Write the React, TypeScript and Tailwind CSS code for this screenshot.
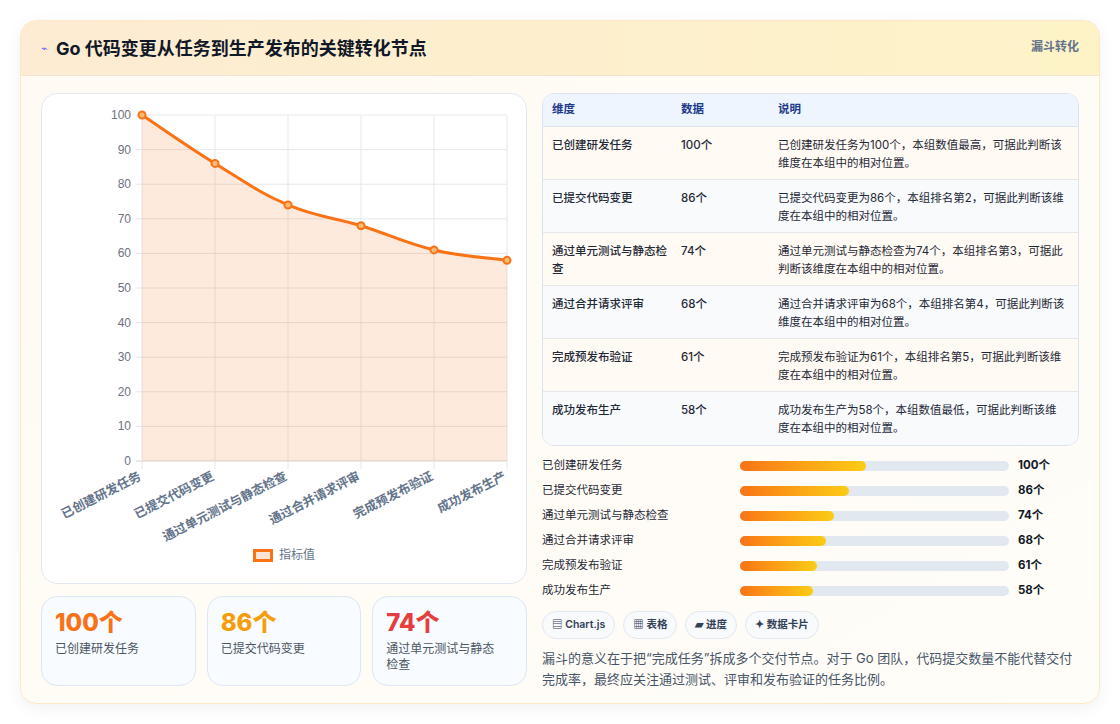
import React from 'react';

const font = { fontFamily: 'Inter, "Noto Sans CJK SC", sans-serif' };

const data = [
  { name: '已创建研发任务', value: 100, desc: '已创建研发任务为100个，本组数值最高，可据此判断该维度在本组中的相对位置。' },
  { name: '已提交代码变更', value: 86, desc: '已提交代码变更为86个，本组排名第2，可据此判断该维度在本组中的相对位置。' },
  { name: '通过单元测试与静态检查', value: 74, desc: '通过单元测试与静态检查为74个，本组排名第3，可据此判断该维度在本组中的相对位置。' },
  { name: '通过合并请求评审', value: 68, desc: '通过合并请求评审为68个，本组排名第4，可据此判断该维度在本组中的相对位置。' },
  { name: '完成预发布验证', value: 61, desc: '完成预发布验证为61个，本组排名第5，可据此判断该维度在本组中的相对位置。' },
  { name: '成功发布生产', value: 58, desc: '成功发布生产为58个，本组数值最低，可据此判断该维度在本组中的相对位置。' },
];

const X0 = 100, X1 = 465, Y0 = 367, K = 3.46;
const pts = data.map((d, i) => [X0 + (i * (X1 - X0)) / 5, Y0 - d.value * K]);

function smooth(p: number[][]) {
  let d = `M${p[0][0]},${p[0][1]}`;
  for (let i = 0; i < p.length - 1; i++) {
    const a = p[i - 1] || p[i], b = p[i], c = p[i + 1], e = p[i + 2] || c;
    const t = 0.2;
    d += ` C${b[0] + (c[0] - a[0]) * t},${b[1] + (c[1] - a[1]) * t} ${c[0] - (e[0] - b[0]) * t},${c[1] - (e[1] - b[1]) * t} ${c[0]},${c[1]}`;
  }
  return d;
}

function Chart() {
  const line = smooth(pts);
  return (
    <svg width="486" height="450" className="block overflow-visible">
      {[0, 10, 20, 30, 40, 50, 60, 70, 80, 90, 100].map((v) => (
        <g key={v}>
          <line x1={X0 - 6} x2={X1} y1={Y0 - v * K} y2={Y0 - v * K} stroke={v === 0 ? '#d6d3d1' : '#e5e7eb'} />
          <text x={89} y={Y0 - v * K + 4} textAnchor="end" fontSize="12" fill="#6b7280" fontFamily="Liberation Sans, sans-serif">{v}</text>
        </g>
      ))}
      {pts.map((p, i) => (
        <line key={i} x1={p[0]} x2={p[0]} y1={22} y2={Y0 + 8} stroke="#e5e7eb" />
      ))}
      <path d={`${line} L${X1},${Y0} L${X0},${Y0} Z`} fill="rgba(249,115,22,0.15)" />
      <path d={line} fill="none" stroke="#f97316" strokeWidth="3" />
      {pts.map((p, i) => (
        <circle key={i} cx={p[0]} cy={p[1]} r="3.5" fill="#fdba74" stroke="#f97316" strokeWidth="2" />
      ))}
      {pts.map((p, i) => (
        <text key={i} x={p[0]} y={Y0 + 18} textAnchor="end" fontSize="12.5" fontWeight="600" fill="#64748b"
          transform={`rotate(-27 ${p[0]} ${Y0 + 18})`} style={font}>{data[i].name}</text>
      ))}
    </svg>
  );
}

export default function App() {
  return (
    <div className="w-[1120px] h-[724px] bg-white p-5" style={font}>
      <div className="h-[684px] rounded-2xl border border-[#fde7c7] bg-gradient-to-br from-[#fffaf3] to-[#fffdf8] shadow-[0_4px_16px_rgba(0,0,0,0.06)] overflow-hidden">
        <div className="h-[55px] flex items-center justify-between px-5 bg-gradient-to-r from-[#fdebd3] to-[#fdf3c7] border-b border-[#f1e6d4]">
          <div className="flex items-center gap-2">
            <span className="text-[11px] text-[#6366f1]">⌁</span>
            <h1 className="text-[18px] font-bold text-[#111827]">Go 代码变更从任务到生产发布的关键转化节点</h1>
          </div>
          <span className="text-[12px] font-semibold text-[#64748b] self-start mt-[17px]">漏斗转化</span>
        </div>
        <div className="flex gap-[15px] px-5 pt-[17px]">
          <div className="w-[486px] flex flex-col gap-3">
            <div className="h-[491px] rounded-2xl border border-[#e2e8f0] bg-white">
              <Chart />
              <div className="flex items-center justify-center gap-1.5 mt-[2px]">
                <span className="w-[20px] h-[13px] border-[3px] border-[#f97316] bg-[#fde5d4]" />
                <span className="text-[12px] text-[#64748b]">指标值</span>
              </div>
            </div>
            <div className="grid grid-cols-3 gap-[11px]">
              {[
                ['100个', '#f97316', '已创建研发任务'],
                ['86个', '#f59e0b', '已提交代码变更'],
                ['74个', '#e53e3e', '通过单元测试与静态检查'],
              ].map(([v, c, l]) => (
                <div key={l} className="h-[90px] rounded-2xl border border-[#dbe7f3] bg-[#f8fbff] pl-[13px] pr-[20px] pt-[10px]">
                  <div className="text-[24px] font-extrabold leading-[32px]" style={{ color: c }}>{v}</div>
                  <div className="text-[12px] text-[#4b5563] leading-[16px] mt-[2px]">{l}</div>
                </div>
              ))}
            </div>
          </div>
          <div className="w-[539px] flex flex-col">
            <div className="rounded-xl border border-[#dbe3ee] overflow-hidden bg-white">
              <div className="flex h-[33px] items-center bg-[#eef5ff] border-b border-[#dbe3ee] text-[11.5px] font-semibold text-[#1e3a8a]">
                <div className="w-[138px] pl-[9px]">维度</div>
                <div className="w-[97px]">数据</div>
                <div className="flex-1">说明</div>
              </div>
              {data.map((d, i) => (
                <div key={i} className={`flex h-[53px] pt-[9px] text-[11.5px] leading-[18px] text-[#1f2937] border-b border-[#e5e7eb] last:border-b-0 ${i % 2 === 0 ? 'bg-[#fffaf3]' : 'bg-[#f8fafc]'}`}>
                  <div className="w-[138px] pl-[9px] pr-3 font-medium">{d.name}</div>
                  <div className="w-[97px] font-medium">{d.value}个</div>
                  <div className="flex-1 pr-3">{d.desc}</div>
                </div>
              ))}
            </div>
            <div className="flex flex-col gap-[9px] mt-[12px]">
              {data.map((d) => (
                <div key={d.name} className="flex items-center h-[16px] text-[11.5px]">
                  <div className="w-[198px] text-[#1f2937]">{d.name}</div>
                  <div className="w-[269px] h-[10px] rounded-full bg-[#e2e8f0]">
                    <div className="h-full rounded-full bg-gradient-to-r from-[#f97316] to-[#facc15]" style={{ width: `${d.value * 0.47}%` }} />
                  </div>
                  <div className="ml-[9px] font-bold text-[#111827]">{d.value}个</div>
                </div>
              ))}
            </div>
            <div className="flex gap-2 mt-[12px]">
              {['▤ Chart.js', '▦ 表格', '▰ 进度', '✦ 数据卡片'].map((c) => (
                <span key={c} className="h-[28px] px-[9px] flex items-center rounded-full border border-[#e2e8f0] bg-[#f8fafc] text-[10.5px] font-semibold text-[#334155]">{c}</span>
              ))}
            </div>
            <p className="mt-[9px] text-[13px] leading-[21px] text-[#475569]">
              漏斗的意义在于把“完成任务”拆成多个交付节点。对于 Go 团队，代码提交数量不能代替交付完成率，最终应关注通过测试、评审和发布验证的任务比例。
            </p>
          </div>
        </div>
      </div>
    </div>
  );
}
